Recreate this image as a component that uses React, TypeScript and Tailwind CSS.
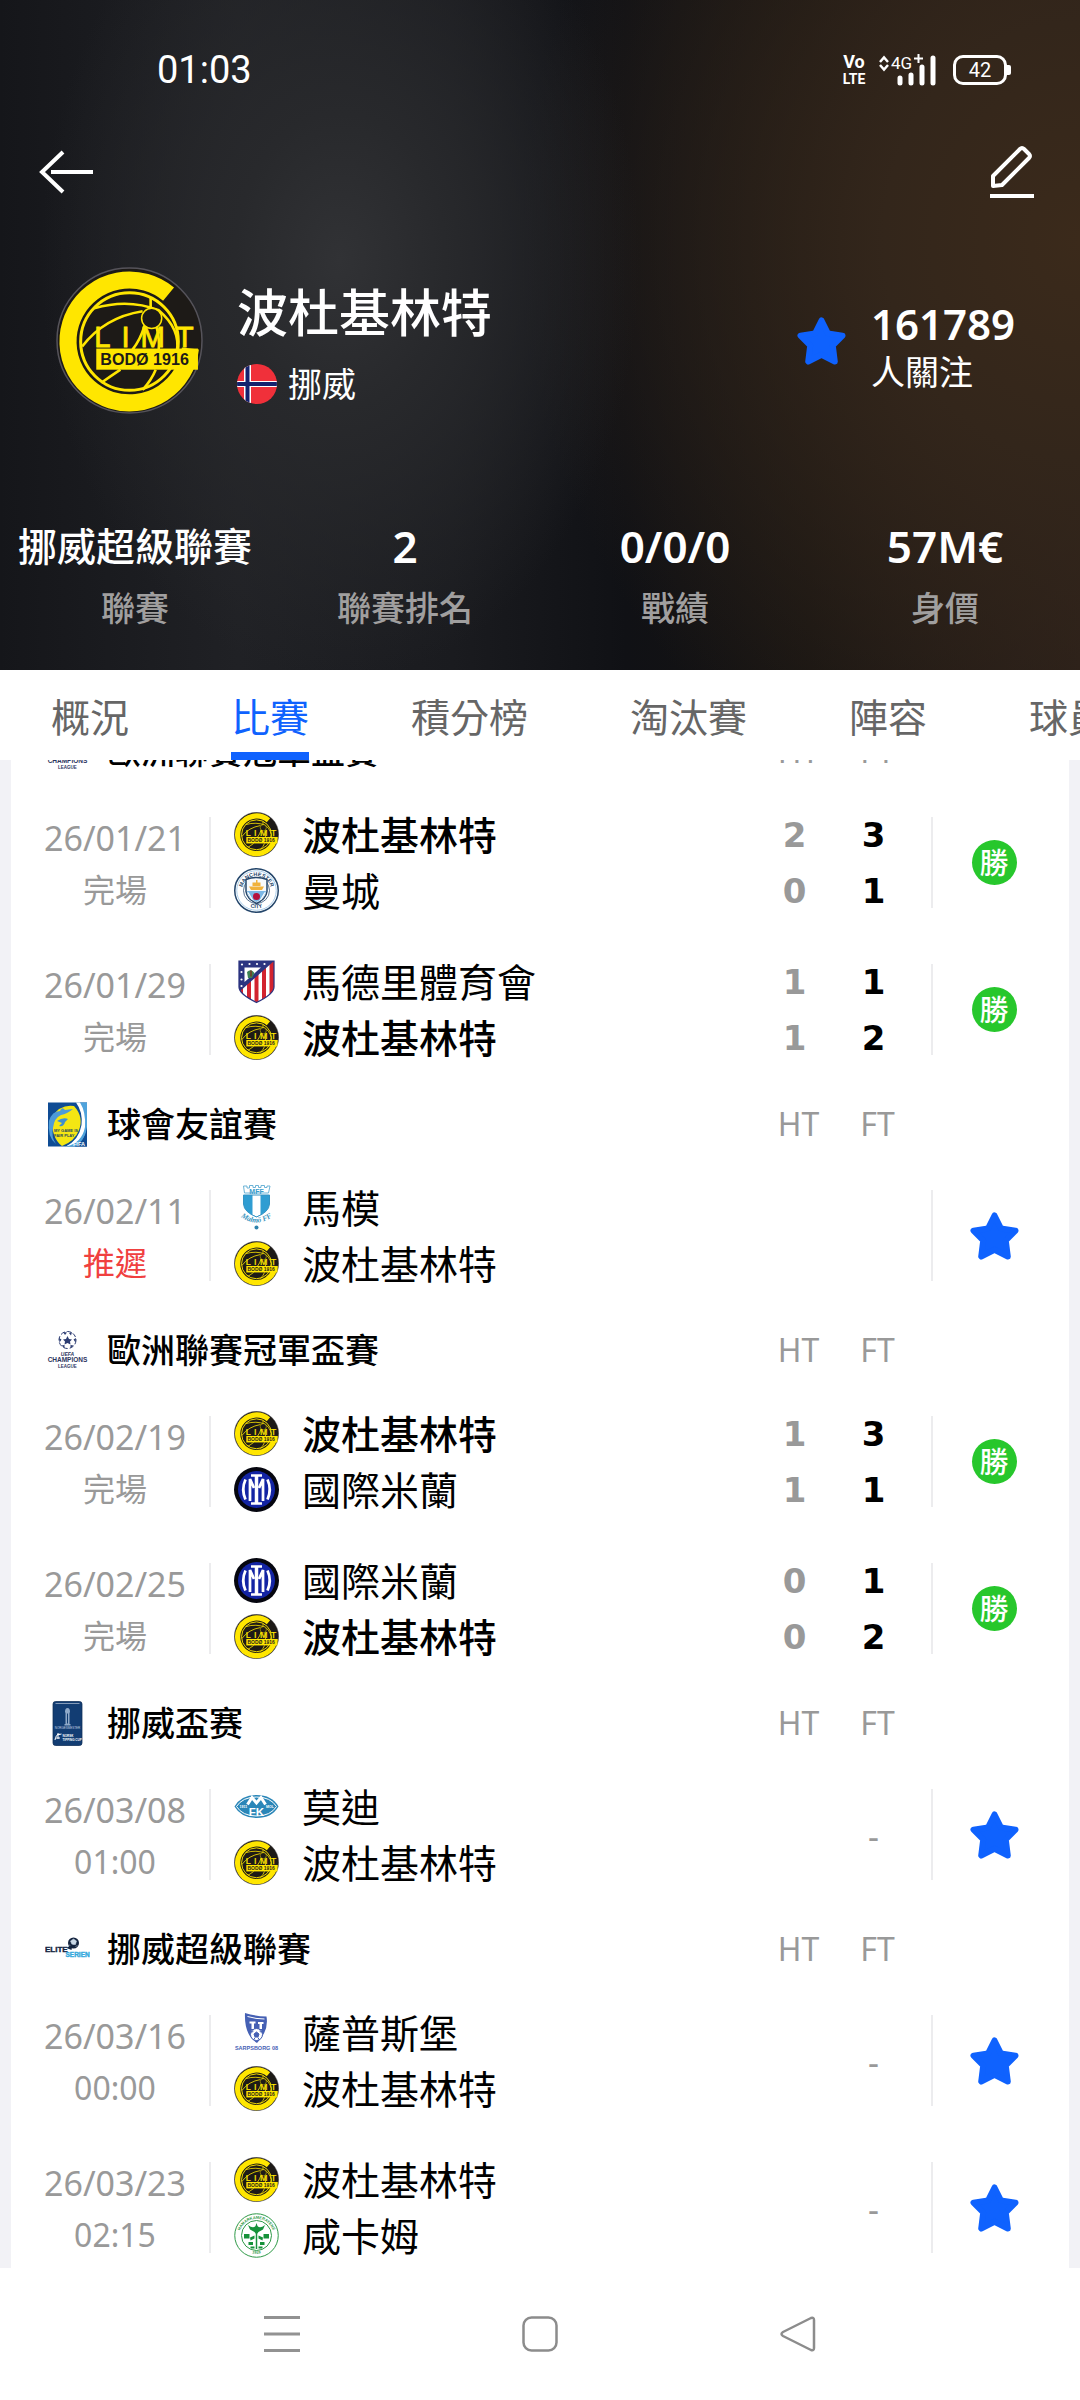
import React, { useState } from "react";

const Star = ({ className }: { className: string }) => (
  <svg viewBox="0 0 49 48" className={className} aria-hidden="true">
    <path
      d="M24.5 3.5 L31 16.5 L45.5 18.6 L35.8 28.5 L37.8 44.5 L24.5 37.8 L11.2 44.5 L13.2 28.5 L3.5 18.6 L18 16.5 Z"
      fill="#0f62fe"
      stroke="#0f62fe"
      strokeWidth="6"
      strokeLinejoin="round"
    />
  </svg>
);

const BodoCrest = ({ className }: { className: string }) => (
  <svg viewBox="0 0 146 146" className={className} aria-hidden="true">
    <circle cx="73" cy="73" r="72" fill="#1d1a17" stroke="#55535a" strokeWidth="1.5" />
    <path d="M111.8 27 A61 61 0 1 0 133.5 81" fill="none" stroke="#ffe600" strokeWidth="17" />
    <circle cx="73" cy="74" r="48.5" fill="none" stroke="#ffe600" strokeWidth="3" />
    <g fill="none" stroke="#ffe600" strokeWidth="2.6">
      <path d="M26 79 Q48 50 86 44" />
      <path d="M38 41 Q72 31 102 43 Q124 62 120 84" />
      <path d="M88 58 Q84 72 76 82 M64 102 Q55 108 45 115" />
      <path d="M100 60 Q103 72 102 82 M99 102 Q95 112 86 122" />
      <path d="M94 30 V42" />
    </g>
    <circle cx="95" cy="51" r="10" fill="#1d1a17" stroke="#ffe600" strokeWidth="1.5" />
    <rect x="40" y="81" width="101" height="21" fill="#ffe600" />
    <g
      fill="#ffe600"
      stroke="#ffe600"
      strokeWidth="0.8"
      fontFamily="Liberation Sans, Arial, sans-serif"
      fontSize="29"
    >
      <text x="38" y="79">L</text>
      <text x="65" y="79">I</text>
      <text x="84" y="79">M</text>
      <text x="119" y="79">T</text>
    </g>
    <text
      x="88"
      y="97"
      textAnchor="middle"
      fill="#1d1a17"
      fontFamily="Liberation Sans, Arial, sans-serif"
      fontWeight="700"
      fontSize="16"
    >
      BODØ 1916
    </text>
  </svg>
);

const ManCityCrest = ({ className }: { className: string }) => (
  <svg viewBox="0 0 90 90" className={className} aria-hidden="true">
    <circle cx="45" cy="45" r="43.5" fill="#fff" stroke="#24466b" strokeWidth="3" />
    <circle cx="45" cy="45" r="39.5" fill="none" stroke="#8fbde3" strokeWidth="1.5" />
    <defs>
      <path id="city-top" d="M16 45 A29 29 0 0 1 74 45" />
      <path id="city-bottom" d="M9.500 45 A35.500 35.500 0 0 0 80.500 45" />
    </defs>
    <g fill="#24466b" fontFamily="Liberation Sans, Arial, sans-serif" fontWeight="700" fontSize="11">
      <text>
        <textPath href="#city-top" startOffset="50%" textAnchor="middle">MANCHESTER</textPath>
      </text>
      <text>
        <textPath href="#city-bottom" startOffset="50%" textAnchor="middle">CITY</textPath>
      </text>
    </g>
    <circle cx="45" cy="45" r="26" fill="none" stroke="#24466b" strokeWidth="1.5" />
    <path d="M24 23 Q45 15 66 23 V47 Q64 62 45 71 Q26 62 24 47 Z" fill="#f7f9fb" stroke="#24466b" strokeWidth="3" />
    <path d="M26 46 H64 Q62 60 45 68 Q28 60 26 46 Z" fill="#7db8e6" />
    <path d="M30 37 H60 L56 44 H34 Z M37 36 V29 H53 V36 Z M44 29 V24 H47 V29 Z" fill="#f0b23c" />
    <circle cx="45" cy="57" r="7" fill="#b5123e" />
    <path d="M28 49 L37 64 M62 49 L53 64" stroke="#fff" strokeWidth="2.500" />
  </svg>
);

const AtleticoCrest = ({ className }: { className: string }) => (
  <svg viewBox="0 0 90 90" className={className} aria-hidden="true">
    <defs>
      <clipPath id="atm-shield">
        <path d="M10 4 H80 V56 Q80 70 45 87 Q10 70 10 56 Z" />
      </clipPath>
    </defs>
    <g clipPath="url(#atm-shield)">
      <rect width="90" height="90" fill="#fff" />
      <path d="M10 30h8v60h-8z M26 30h8v60h-8z M41 20h8v70h-8z M56 4h8v86h-8z M71 4h9v86h-9z" fill="#d2232f" />
      <path d="M10 4 H80 L10 66 Z" fill="#2b3480" />
      <path d="M21 17 H54 L21 46 Z" fill="#fff" />
      <path d="M26 26 Q34 18 41 28 L36 38 H28 Z" fill="#3c8154" />
      <path d="M32 23 h4 v12 h-4z" fill="#6b4a2d" />
    </g>
    <g fill="#fff">
      <circle cx="16" cy="11" r="2.200" />
      <circle cx="31" cy="10" r="2.200" />
      <circle cx="46" cy="10" r="2.200" />
      <circle cx="61" cy="10" r="2.200" />
      <circle cx="15" cy="26" r="2.200" />
      <circle cx="15" cy="41" r="2.200" />
      <circle cx="15" cy="54" r="2.200" />
    </g>
    <path d="M10 4 H80 V56 Q80 70 45 87 Q10 70 10 56 Z" fill="none" stroke="#2b3480" strokeWidth="2.500" />
  </svg>
);

const MalmoCrest = ({ className }: { className: string }) => (
  <svg viewBox="0 0 90 90" className={className} aria-hidden="true">
    <path d="M19 2 h7 v4 h5 V1 h7 v4 h5 V1 h6 v4 h5 V1 h7 v4 h5 V2 h6 L69 16 H21 Z" fill="#fff" stroke="#6cb3d6" strokeWidth="2" />
    <text x="45" y="18" textAnchor="middle" fontFamily="Liberation Sans, Arial, sans-serif" fontWeight="700" fontSize="14" fill="#3a9ccb">
      MFF
    </text>
    <path d="M19 20 H71 V38 Q70 54 45 64 Q20 54 19 38 Z" fill="#2f9dd2" />
    <path d="M37 20 H53 V60 L45 63 L37 60 Z" fill="#fff" />
    <path d="M19 20 H71 V38 Q70 54 45 64 Q20 54 19 38 Z" fill="none" stroke="#3494c4" strokeWidth="2" />
    <defs>
      <path id="malmo-name" d="M14 64 Q45 86 76 64" />
    </defs>
    <text fontFamily="Liberation Serif, serif" fontStyle="italic" fontWeight="700" fontSize="15" fill="#3a94bd">
      <textPath href="#malmo-name" startOffset="50%" textAnchor="middle">Malmö FF</textPath>
    </text>
    <circle cx="45" cy="85" r="4" fill="#2f82ab" />
  </svg>
);

const InterCrest = ({ className }: { className: string }) => (
  <svg viewBox="0 0 90 90" className={className} aria-hidden="true">
    <circle cx="45" cy="45" r="45" fill="#05060f" />
    <circle cx="45" cy="45" r="37" fill="#1324a3" />
    <g fill="none" stroke="#fff" strokeWidth="5.500">
      <path d="M45 16 V74" strokeWidth="7" />
      <path d="M34 17 H56 M34 73 H56" strokeWidth="5" />
      <path d="M32 68 V24 L40 42 M58 68 V24 L50 42" />
      <path d="M23 25 Q14 45 23 65" />
      <path d="M67 25 Q76 45 67 65" />
    </g>
  </svg>
);

const MoldeCrest = ({ className }: { className: string }) => (
  <svg viewBox="0 0 90 90" className={className} aria-hidden="true">
    <path d="M1 45 Q14 22 45 22 Q76 22 89 45 Q76 68 45 68 Q14 68 1 45 Z" fill="#2a86b8" />
    <path d="M5 45 Q17 26 45 26 Q73 26 85 45 Q73 64 45 64 Q17 64 5 45 Z" fill="none" stroke="#fff" strokeWidth="2" />
    <path d="M27 41 L36 27 L45 38 L54 27 L63 41" fill="none" stroke="#fff" strokeWidth="6" />
    <text x="45" y="64" textAnchor="middle" fontFamily="Liberation Sans, Arial, sans-serif" fontWeight="700" fontSize="23" fill="#fff">
      FK
    </text>
    <g fill="#fff" fontFamily="Liberation Sans, Arial, sans-serif" fontWeight="700" fontSize="7">
      <text x="11" y="48">1911</text>
      <text x="64" y="48">MOL</text>
    </g>
  </svg>
);

const SarpsborgCrest = ({ className }: { className: string }) => (
  <svg viewBox="0 0 90 90" className={className} aria-hidden="true">
    <path d="M22 6 Q42 12 65 13 Q70 42 46 66 Q20 50 22 6 Z" fill="#4560b4" />
    <path d="M27 13 Q44 18 61 18" fill="none" stroke="#fff" strokeWidth="2" />
    <path d="M31 23 H43 V27 H40 V38 H35 V27 H31 Z M48 24 H59 V28 H56 V38 H51 V28 H48 Z" fill="#fff" />
    <circle cx="45" cy="49" r="12" fill="#fff" stroke="#4560b4" strokeWidth="2" />
    <path d="M45 44 l5 4 -2 6 h-6 l-2-6z M35 45 l4 -3 M55 45 l-4 -3 M40 59 l2-4 M50 59 l-2-4" fill="#4560b4" stroke="#4560b4" strokeWidth="2" />
    <text x="45" y="80" textAnchor="middle" fontFamily="Liberation Sans, Arial, sans-serif" fontWeight="700" fontSize="11" fill="#4560b4">
      SARPSBORG 08
    </text>
  </svg>
);

const HamKamCrest = ({ className }: { className: string }) => (
  <svg viewBox="0 0 90 90" className={className} aria-hidden="true">
    <circle cx="45" cy="45" r="43.500" fill="#fff" stroke="#2f9a48" strokeWidth="2" />
    <circle cx="45" cy="45" r="30" fill="none" stroke="#2f9a48" strokeWidth="2" />
    <defs>
      <path id="hamkam-top" d="M14 63 A35 35 0 1 1 76 63" />
      <path id="hamkam-bottom" d="M25 74 Q45 90 65 74" />
    </defs>
    <g fontFamily="Liberation Sans, Arial, sans-serif" fontWeight="700" fontSize="8" fill="#2f9a48">
      <text>
        <textPath href="#hamkam-top" startOffset="50%" textAnchor="middle">HAMARKAMERATENE</textPath>
      </text>
      <text>
        <textPath href="#hamkam-bottom" startOffset="50%" textAnchor="middle">1918</textPath>
      </text>
    </g>
    <g fill="#16923a">
      <path d="M28 24 Q38 32 43 26 L45 20 L47 26 Q52 32 62 24 L58 33 L49 38 L45 43 L41 38 L32 33 Z" />
      <path d="M43.500 38 h3 v34 h-3z" />
      <path d="M20 42 h11 v9 h-11z M59 42 h11 v9 h-11z M32 49 l9-4 v6 l-8 4z M58 49 l-9-4 v6 l8 4z" />
      <path d="M29 58 h9 v6 h-9z M52 58 h9 v6 h-9z M33 67 h8 v4 h-8z M49 67 h8 v4 h-8z" />
    </g>
  </svg>
);

const FriendlyLogo = ({ className }: { className: string }) => (
  <svg viewBox="0 0 90 90" className={className} aria-hidden="true">
    <rect x="6" y="1" width="78" height="88" fill="#0f4c94" />
    <path d="M68 1 H84 V50 Q80 80 62 89 H42 Q92 60 68 1Z" fill="#4fa3dc" />
    <path d="M62 1 Q76 20 73 46 Q68 76 42 89 Q74 82 80 50 Q82 20 70 1 Z" fill="#fff" />
    <path d="M60 89 Q78 78 84 56 V89 Z" fill="#0f4c94" />
    <path d="M14 30 Q30 4 58 8 Q78 30 68 56 Q60 78 34 88 Q12 72 14 30Z" fill="#f4e613" />
    <path d="M8 38 Q14 18 30 18 Q34 8 40 16 L56 14 Q44 24 32 26 Q18 32 16 52 Q12 70 22 84 Q4 70 8 38Z" fill="#4d9bd8" />
    <path d="M24 38 Q36 30 46 34 L40 40 Q38 50 28 48 L34 42 Z" fill="#3f8fd0" />
    <g fontFamily="Liberation Sans, Arial, sans-serif" fontWeight="700">
      <text x="18" y="60" fontSize="8" fill="#26485c">MY GAME IS</text>
      <text x="18" y="69" fontSize="8" fill="#26485c">FAIR PLAY</text>
      <text x="56" y="87" fontSize="11" fill="#fff">FIFA</text>
    </g>
  </svg>
);

const ChampionsLogo = ({ className }: { className: string }) => (
  <svg viewBox="0 0 90 90" className={className} aria-hidden="true">
    <circle cx="45" cy="24" r="17" fill="#fff" stroke="#2c3c72" strokeWidth="2" strokeDasharray="9 4" />
    <g fill="#2c3c72">
      <path d="M45 16 l3 6 6 1 -4 4 1 6 -6-3 -6 3 1-6 -4-4 6-1z" />
      <path d="M36 8 l8 1 -4 5z M54 8 l-6 2 4 5z M28 20 l5 3 -4 6z M62 20 l-5 3 4 6z M33 35 l6-1 0 6z M57 35 l-6-1 0 6z" />
    </g>
    <g textAnchor="middle" fill="#2c3560" fontFamily="Liberation Sans, Arial, sans-serif" fontWeight="700">
      <text x="45" y="55" fontSize="10" fontStyle="italic">UEFA</text>
      <text x="45" y="68" fontSize="13">CHAMPIONS</text>
      <text x="45" y="79" fontSize="9">LEAGUE</text>
    </g>
  </svg>
);

const NorwayCupLogo = ({ className }: { className: string }) => (
  <svg viewBox="0 0 90 90" className={className} aria-hidden="true">
    <rect x="16" y="1" width="58" height="88" rx="5" fill="#123d73" stroke="#0d2d57" strokeWidth="1.500" />
    <path d="M21 5 H69" stroke="#a9b9cf" strokeWidth="1.500" />
    <path d="M40 22 Q40 14 45 14 Q50 14 50 22 L49 24 V46 H51 V49 H39 V46 H41 V24 Z" fill="#8fa9c9" />
    <path d="M44 25 h2 v20 h-2z" fill="#123d73" />
    <text x="45" y="56" textAnchor="middle" fontFamily="Liberation Sans, Arial, sans-serif" fontSize="6" fill="#c5d2e4">
      NORGESMESTER
    </text>
    <path d="M20 78 Q22 66 29 66 M24 68 L33 66 M22 74 h8 M26 64 v12" stroke="#fff" strokeWidth="2" fill="none" />
    <g fontFamily="Liberation Sans, Arial, sans-serif" fontWeight="700" fontSize="6" fill="#fff">
      <text x="35" y="72">NORSK</text>
      <text x="35" y="79">TIPPING CUP</text>
    </g>
  </svg>
);

const EliteserienLogo = ({ className }: { className: string }) => (
  <svg viewBox="0 0 90 90" className={className} aria-hidden="true">
    <circle cx="57" cy="32" r="11" fill="#14243f" />
    <path d="M51 28 l6-4 6 4 -2 7 h-7z M48 36 l5 2 M65 36 l-4 4" fill="#c9d8e6" stroke="#c9d8e6" />
    <path d="M43 42 L55 34 L53 46 Z" fill="#14243f" />
    <g fontFamily="Liberation Sans, Arial, sans-serif" fontWeight="700">
      <text x="0" y="49" fontSize="16" stroke="#14243f" strokeWidth="0.8" fill="#14243f">ELITE</text>
      <text x="41" y="60" fontSize="13" stroke="#35a9dc" strokeWidth="0.8" fill="#35a9dc">SERIEN</text>
    </g>
  </svg>
);

const NorwayFlag = ({ className }: { className: string }) => (
  <svg viewBox="0 0 40 40" className={className} aria-hidden="true">
    <defs>
      <clipPath id="flag-round">
        <circle cx="20" cy="20" r="20" />
      </clipPath>
    </defs>
    <g clipPath="url(#flag-round)">
      <rect width="40" height="40" fill="#f0303a" />
      <path d="M7 0 h7 v40 h-7z M0 17 h40 v6 h-40z" fill="#fff" />
      <path d="M8.500 0 h4 v40 h-4z M0 18 h40 v4 h-40z" fill="#14226e" />
    </g>
  </svg>
);

const Signal = () => (
  <svg viewBox="0 0 58 34" className="h-[34px] w-[58px]" aria-label="4G+ 訊號">
    <path d="M2 9 L6 4.500 L10 9 M2 12 L6 16.500 L10 12" fill="none" stroke="#fff" strokeWidth="2.500" />
    <text x="13" y="16" fontFamily="Roboto, sans-serif" fontSize="17" fill="#fff">4G</text>
    <path d="M36 5.500 h9 M40.500 1 v9" stroke="#fff" strokeWidth="2" />
    <path d="M22 25 V30 M33 22 V30 M44 14 V30 M55 5 V30" stroke="#fff" strokeWidth="5" strokeLinecap="round" />
  </svg>
);

type Crest = (props: { className: string }) => React.ReactElement;

interface Team {
  name: string;
  crest: Crest;
  ht?: number;
  ft?: number;
  winner?: boolean;
}

interface Match {
  date: string;
  status: string;
  postponed?: boolean;
  scheduled?: boolean;
  won?: boolean;
  teams: Team[];
}

const bodo = { name: "波杜基林特", crest: BodoCrest };
const inter = { name: "國際米蘭", crest: InterCrest };

const groups: { title: string; logo: Crest; matches: Match[] }[] = [
  {
    title: "歐洲聯賽冠軍盃賽",
    logo: ChampionsLogo,
    matches: [
      {
        date: "26/01/21",
        status: "完場",
        won: true,
        teams: [
          { ...bodo, ht: 2, ft: 3, winner: true },
          { name: "曼城", crest: ManCityCrest, ht: 0, ft: 1 },
        ],
      },
      {
        date: "26/01/29",
        status: "完場",
        won: true,
        teams: [
          { name: "馬德里體育會", crest: AtleticoCrest, ht: 1, ft: 1 },
          { ...bodo, ht: 1, ft: 2, winner: true },
        ],
      },
    ],
  },
  {
    title: "球會友誼賽",
    logo: FriendlyLogo,
    matches: [
      {
        date: "26/02/11",
        status: "推遲",
        postponed: true,
        teams: [{ name: "馬模", crest: MalmoCrest }, bodo],
      },
    ],
  },
  {
    title: "歐洲聯賽冠軍盃賽",
    logo: ChampionsLogo,
    matches: [
      {
        date: "26/02/19",
        status: "完場",
        won: true,
        teams: [
          { ...bodo, ht: 1, ft: 3, winner: true },
          { ...inter, ht: 1, ft: 1 },
        ],
      },
      {
        date: "26/02/25",
        status: "完場",
        won: true,
        teams: [
          { ...inter, ht: 0, ft: 1 },
          { ...bodo, ht: 0, ft: 2, winner: true },
        ],
      },
    ],
  },
  {
    title: "挪威盃赛",
    logo: NorwayCupLogo,
    matches: [
      {
        date: "26/03/08",
        status: "01:00",
        scheduled: true,
        teams: [{ name: "莫迪", crest: MoldeCrest }, bodo],
      },
    ],
  },
  {
    title: "挪威超級聯賽",
    logo: EliteserienLogo,
    matches: [
      {
        date: "26/03/16",
        status: "00:00",
        scheduled: true,
        teams: [{ name: "薩普斯堡", crest: SarpsborgCrest }, bodo],
      },
      {
        date: "26/03/23",
        status: "02:15",
        scheduled: true,
        teams: [bodo, { name: "咸卡姆", crest: HamKamCrest }],
      },
    ],
  },
];

const stats = [
  { value: "挪威超級聯賽", label: "聯賽", cjk: true },
  { value: "2", label: "聯賽排名" },
  { value: "0/0/0", label: "戰績" },
  { value: "57M€", label: "身價" },
];

const tabs = ["概況", "比賽", "積分榜", "淘汰賽", "陣容", "球員"];

const ScoreColumn = ({ values, className }: { values: (number | undefined)[]; className: string }) => (
  <div
    className={`flex w-[79px] flex-col items-center font-['DejaVu_Sans',sans-serif] text-[34px] leading-[56px] font-bold ${className}`}
  >
    {values.map((value, i) => (
      <span key={i} className="h-[56px]">
        {value}
      </span>
    ))}
  </div>
);

const MatchRow = ({ match }: { match: Match }) => (
  <li className="flex h-[147px] items-center">
    <div className="flex w-[198px] shrink-0 flex-col items-center pt-[3px] pl-[10px] text-[32px] leading-[52px] text-[#999]">
      <span className="text-[34px]">{match.date}</span>
      <span className={match.postponed ? "text-[#f0403f]" : ""}>{match.status}</span>
    </div>
    <div className="h-[91px] w-[2px] shrink-0 bg-[#ececee]" />
    <div className="flex min-w-0 flex-1 flex-col pl-[23px]">
      {match.teams.map((team, i) => {
        const CrestIcon = team.crest;
        return (
          <div key={i} className="flex h-[56px] items-center gap-[23px]">
            <CrestIcon className="size-[45px] shrink-0" />
            <span
              className={`truncate text-[39px] leading-[56px] text-black ${team.winner ? "font-medium" : "font-normal"}`}
            >
              {team.name}
            </span>
          </div>
        );
      })}
    </div>
    <ScoreColumn values={match.teams.map((t) => t.ht)} className="text-[#999]" />
    {match.scheduled ? (
      <div className="w-[79px] pt-1 text-center text-[34px] text-[#999]">-</div>
    ) : (
      <ScoreColumn values={match.teams.map((t) => t.ft)} className="text-black" />
    )}
    <div className="ml-[18px] h-[91px] w-[2px] shrink-0 bg-[#ececee]" />
    <div className="mr-[14px] flex w-[122px] shrink-0 items-center justify-center">
      {match.won ? (
        <span className="flex size-[45px] items-center justify-center rounded-full bg-[#27c72c] text-[29px] leading-none font-medium text-white">
          勝
        </span>
      ) : (
        <button type="button" aria-label="取消關注賽事">
          <Star className="h-[48px] w-[49px]" />
        </button>
      )}
    </div>
  </li>
);

export default function App() {
  const [active, setActive] = useState("比賽");

  return (
    <div className="flex h-screen flex-col overflow-hidden bg-white font-['Noto_Sans','Noto_Sans_CJK_TC',sans-serif]">
      <header className="shrink-0 bg-[radial-gradient(ellipse_300px_420px_at_340px_260px,#313235_0%,#28292c_35%,transparent_100%),radial-gradient(ellipse_560px_620px_at_1080px_240px,#3b2a1b_0%,#33261b_35%,transparent_100%),linear-gradient(90deg,#15161a_0%,#202125_22%,#1a1b1f_42%,#101115_58%,#171412_75%,#291e19_100%)] pb-[40px] text-white">
        <div className="flex h-[139px] items-center justify-between pr-[69px] pl-[157px]">
          <time className="font-['Roboto',sans-serif] text-[38px] leading-none font-normal">01:03</time>
          <div className="flex items-center">
            <svg viewBox="0 0 24 34" className="h-[34px] w-6" aria-label="VoLTE">
              <g fill="#fff" fontFamily="Roboto, sans-serif" fontWeight="700" textAnchor="middle">
                <text x="12" y="15" fontSize="18">Vo</text>
                <text x="12" y="31" fontSize="14">LTE</text>
              </g>
            </svg>
            <span className="ml-[12px] flex">
              <Signal />
            </span>
            <span className="ml-[17px] flex h-[30px] w-[54px] items-center justify-center rounded-[10px] border-[3px] border-white font-['Roboto',sans-serif] text-[20px] leading-none font-normal">
              42
            </span>
            <span className="h-[10px] w-1 rounded-r-[2px] bg-white" />
          </div>
        </div>

        <div className="flex h-[66px] items-center justify-between pr-[45px] pl-[38px]">
          <button type="button" aria-label="返回">
            <svg viewBox="0 0 56 44" className="h-[44px] w-[56px]" fill="none" stroke="#fff" strokeWidth="4">
              <path d="M25 2 L4 22 L25 42" />
              <path d="M13 22 H55" />
            </svg>
          </button>
          <button type="button" aria-label="編輯">
            <svg viewBox="0 0 46 54" className="h-[54px] w-[46px]" fill="none" stroke="#fff">
              <path d="M4 41 V31 L31 4 Q33 2 35 4 L40 9 Q42 11 40 13 L13 40 L4 41 Z" strokeWidth="4" strokeLinejoin="round" />
              <path d="M1 51 H45" strokeWidth="4" />
            </svg>
          </button>
        </div>

        <div className="mt-[62px] flex items-center pr-[67px] pl-[56px]">
          <BodoCrest className="size-[147px] shrink-0" />
          <div className="ml-[34px] flex flex-col gap-[18px] pt-[5px]">
            <h1 className="text-[51px] leading-[64px] font-medium">波杜基林特</h1>
            <div className="flex items-center gap-[11px]">
              <NorwayFlag className="size-10" />
              <span className="text-[34px] leading-[44px]">挪威</span>
            </div>
          </div>
          <button type="button" aria-label="取消關注球隊" className="ml-auto">
            <Star className="h-[48px] w-[49px]" />
          </button>
          <div className="ml-[25px] flex w-[142px] flex-col gap-[2px] pt-3">
            <strong className="text-[42px] leading-[48px] font-semibold">161789</strong>
            <span className="text-[34px] leading-[44px]">人關注</span>
          </div>
        </div>

        <dl className="mt-[106px] grid grid-cols-4 text-center">
          {stats.map((s) => (
            <div key={s.label} className="flex flex-col-reverse gap-[14px]">
              <dt className="text-[34px] leading-[44px] font-medium text-[#a09f9f]">{s.label}</dt>
              <dd
                className={`leading-[52px] whitespace-nowrap ${s.cjk ? "text-[39px] font-medium" : "text-[44px] font-semibold"}`}
              >
                {s.value}
              </dd>
            </div>
          ))}
        </dl>
      </header>

      <div role="tablist" className="flex h-[90px] shrink-0 gap-[102px] overflow-hidden bg-white pl-[51px]">
        {tabs.map((tab) => (
          <button
            key={tab}
            type="button"
            role="tab"
            aria-selected={tab === active}
            onClick={() => setActive(tab)}
            className={`shrink-0 border-b-8 pt-3 text-[39px] font-normal whitespace-nowrap ${
              tab === active ? "border-[#0f62fe] text-[#0f62fe]" : "border-transparent text-[#666]"
            }`}
          >
            {tab}
          </button>
        ))}
      </div>

      <main className="min-h-0 flex-1 overflow-hidden bg-[#f2f2f6] px-[11px]">
        <div className="-mt-[50px] bg-white">
          {groups.map((group, i) => {
            const Logo = group.logo;
            return (
              <section key={i}>
                <div className="flex h-[79px] items-center pt-[3px] pr-[152px] pl-[34px]">
                  <Logo className="size-[45px] shrink-0" />
                  <h2 className="ml-[17px] flex-1 text-[34px] leading-[52px] font-medium text-black">{group.title}</h2>
                  <span className="w-[79px] text-center text-[32px] text-[#999]">HT</span>
                  <span className="w-[79px] text-center text-[32px] text-[#999]">FT</span>
                </div>
                <ul>
                  {group.matches.map((match) => (
                    <MatchRow key={match.date} match={match} />
                  ))}
                </ul>
              </section>
            );
          })}
        </div>
      </main>

      <nav aria-label="系統導覽" className="grid h-[132px] shrink-0 grid-cols-3 items-center justify-items-center bg-white px-[153px]">
        <button type="button" aria-label="最近使用">
          <svg viewBox="0 0 36 36" className="size-9" stroke="#929292" strokeWidth="3">
            <path d="M0 1.500 H36 M0 18 H36 M0 34.500 H36" />
          </svg>
        </button>
        <button type="button" aria-label="主畫面">
          <svg viewBox="0 0 36 36" className="size-9" fill="none" stroke="#8c8c8c" strokeWidth="2.500">
            <rect x="1.500" y="1.500" width="33" height="33" rx="8" />
          </svg>
        </button>
        <button type="button" aria-label="返回上一頁">
          <svg viewBox="0 0 36 36" className="size-9" fill="none" stroke="#8c8c8c" strokeWidth="2.500" strokeLinejoin="round">
            <path d="M31 2 Q34 1 34 4 V32 Q34 35 31 34 L3 20 Q0 18 3 16 Z" />
          </svg>
        </button>
      </nav>
    </div>
  );
}
